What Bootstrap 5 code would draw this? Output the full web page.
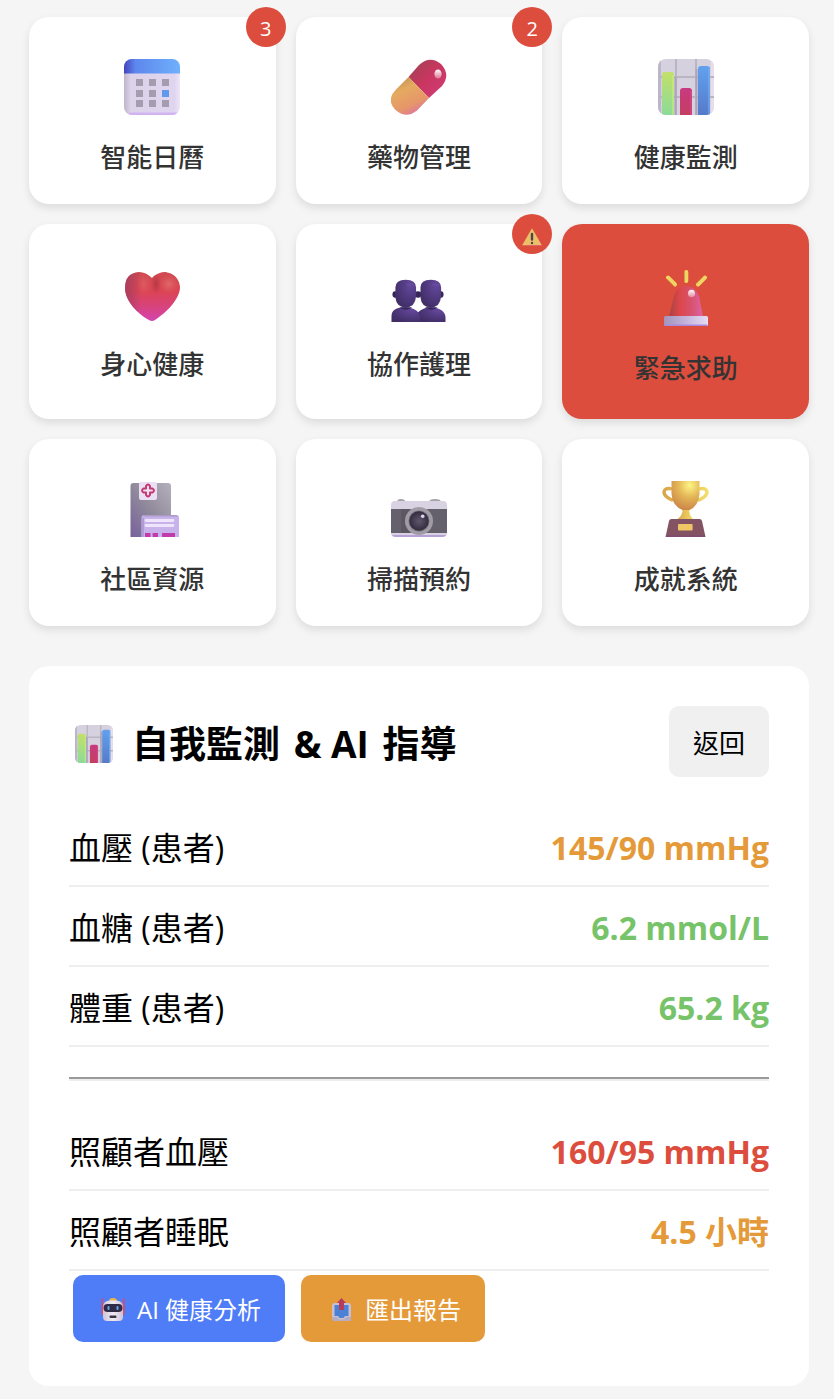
<!DOCTYPE html>
<html lang="zh-Hant">
<head>
<meta charset="utf-8">
<meta name="viewport" content="width=device-width, initial-scale=1">
<title>健康照護</title>
<link href="https://cdn.jsdelivr.net/npm/bootstrap@5.3.0/dist/css/bootstrap.min.css" rel="stylesheet">
<style>
body{background:#f5f5f5;color:#000;font-family:"Open Sans","Noto Sans CJK TC",sans-serif}
.page{padding:17px 25px 13px 29px}
.tiles{display:grid;grid-template-columns:repeat(3,minmax(0,1fr));gap:20px;margin-bottom:40px}
.tile{border:0;border-radius:20px;background:#fff;color:#333;padding:42px 10px 29px;box-shadow:0 4px 8px rgba(0,0,0,.1);font-size:26px;line-height:36px;font-weight:500}
.tile svg{width:56px;height:56px;margin-bottom:24px}
.tile-sos{background:#dc4d3d;padding-top:46px;padding-bottom:33px}
.count{top:-10px;right:-10px;width:40px;height:40px;padding-top:3px;background:#dc4d3d;color:#fff;font-size:20px;line-height:24px;font-weight:400}
.count svg{width:22px;height:20px;margin:3px 0 0}
.panel{background:#fff;border-radius:20px;padding:40px}
.panel-head{margin-bottom:30px}
.panel-head h2{font-size:37px;line-height:48px;font-weight:700;padding:4px 0 0 6px;gap:19px}
.panel-head svg{width:38px;height:38px}
.latin{margin:0 4px}
.back{background:#f0f0f0;border:0;border-radius:10px;font-size:26px;line-height:39px;padding:18px 24px 14px;color:#000}
.reading{height:80px;padding-top:4px;border-bottom:2px solid #eee;font-size:32px;line-height:48px}
.reading dt{font-weight:400}.reading dd{font-weight:700}
.warn{color:#e59a3a}.good{color:#77c36a}.bad{color:#dc4d3d}
.split{margin:30px 0;border:0;border-top:2px solid #9a9a9a;border-bottom:2px solid #eee;opacity:1}
.action{border:0;border-radius:10px;color:#fff;font-size:24px;line-height:35px;padding:17px 24px 15px;margin:4px}
.action svg{width:24px;height:24px;margin:0 12px 0 4px}
.act-ai{background:#4f7cf7}.act-out{background:#e59a3a}
</style>
</head>
<body>
<svg width="0" height="0" class="position-absolute" aria-hidden="true">
<defs>
<linearGradient id="calTop"><stop stop-color="#4144bd"/><stop offset=".2" stop-color="#5d87ed"/><stop offset="1" stop-color="#6fb0fc"/></linearGradient>
<linearGradient id="calBody"><stop stop-color="#bdb5c9"/><stop offset=".12" stop-color="#dcd3ea"/><stop offset=".9" stop-color="#dfd5ef"/><stop offset="1" stop-color="#eee6f7"/></linearGradient>
<linearGradient id="red" x1="0" y1="0" x2="1" y2="1"><stop stop-color="#9c4454"/><stop offset=".5" stop-color="#c9365f"/><stop offset="1" stop-color="#d43c7e"/></linearGradient>
<linearGradient id="amber" x1="0" y1="0" x2=".5" y2="1"><stop stop-color="#b08a4e"/><stop offset=".4" stop-color="#e5aa61"/><stop offset=".8" stop-color="#e69669"/><stop offset="1" stop-color="#e07c94"/></linearGradient>
<linearGradient id="gr" x2="0" y2="1"><stop stop-color="#c2e069"/><stop offset="1" stop-color="#8cdb98"/></linearGradient>
<linearGradient id="pk" x2="0" y2="1"><stop stop-color="#c83a80"/><stop offset="1" stop-color="#c43e62"/></linearGradient>
<linearGradient id="bl" x2="0" y2="1"><stop stop-color="#62a1ee"/><stop offset="1" stop-color="#567aca"/></linearGradient>
<linearGradient id="heart" x2="0" y2="1"><stop stop-color="#cf4a50"/><stop offset=".4" stop-color="#db4454"/><stop offset=".7" stop-color="#d8437c"/><stop offset="1" stop-color="#d345b0"/></linearGradient>
<linearGradient id="heartL"><stop stop-color="#963a62" stop-opacity=".7"/><stop offset=".3" stop-color="#963a62" stop-opacity="0"/></linearGradient>
<radialGradient id="glow"><stop stop-color="#e27173"/><stop offset="1" stop-color="#e06060" stop-opacity="0"/></radialGradient>
<radialGradient id="shade"><stop stop-color="#a8333f" stop-opacity=".7"/><stop offset="1" stop-color="#a8333f" stop-opacity="0"/></radialGradient>
<radialGradient id="head" cx=".75" cy=".2" r=".9"><stop stop-color="#65489c"/><stop offset=".5" stop-color="#513a80"/><stop offset="1" stop-color="#3f2d64"/></radialGradient>
<linearGradient id="dome"><stop stop-color="#a54343"/><stop offset=".3" stop-color="#dc4649"/><stop offset=".65" stop-color="#d8526e"/><stop offset="1" stop-color="#dd64a5"/></linearGradient>
<linearGradient id="foot"><stop stop-color="#a394bd"/><stop offset=".5" stop-color="#c4b4dc"/><stop offset="1" stop-color="#e6dcf5"/></linearGradient>
<linearGradient id="shine" x2="0" y2="1"><stop stop-color="#fff"/><stop offset="1" stop-color="#fff" stop-opacity=".3"/></linearGradient>
<linearGradient id="tower" x1="0" y1="1" x2="1" y2="0"><stop stop-color="#76609c"/><stop offset=".5" stop-color="#908a9a"/><stop offset="1" stop-color="#b5b0be"/></linearGradient>
<radialGradient id="lens"><stop stop-color="#5f566b"/><stop offset=".5" stop-color="#4a4256"/><stop offset="1" stop-color="#322b3e"/></radialGradient>
<radialGradient id="gold" cx=".65" cy=".15" r=".85"><stop stop-color="#fdf585"/><stop offset=".5" stop-color="#e3b556"/><stop offset="1" stop-color="#cd8748"/></radialGradient>
<linearGradient id="goldL"><stop stop-color="#d9a548"/><stop offset="1" stop-color="#f3dc67"/></linearGradient>
<linearGradient id="bot"><stop stop-color="#cfc6d6"/><stop offset=".5" stop-color="#f0e9f4"/><stop offset="1" stop-color="#cdc2d5"/></linearGradient>
<clipPath id="r56"><rect width="56" height="56" rx="8"/></clipPath>
<symbol id="chart" viewBox="0 0 56 56"><g clip-path="url(#r56)"><path fill="#d6d1df" d="M0 0h56v56H0z"/><path fill="#bdb6ca" d="M0 0h3v56H0z"/><path fill="#e7ddec" d="M53 0h3v56h-3z"/><path stroke="#b9b5c1" stroke-width="2" d="M18 0v56M38 0v56M0 18h56M0 38h56"/><path stroke="#aba2bb" stroke-width="2" d="M17.500 18v38M38.500 10v46"/><path d="M4 56V16q0-3 3-3h6q3 0 3 3v40z" fill="url(#gr)"/><path d="M22 56V32q0-3 3-3h6q3 0 3 3v24z" fill="url(#pk)"/><path d="M40 56V10q0-3 3-3h6q3 0 3 3v46z" fill="url(#bl)"/><path stroke="#d0ee7b" d="M15 16v40"/><path stroke="#d75093" d="M33 32v24"/><path stroke="#77b6fa" d="M51 10v46"/></g></symbol>
</defs>
</svg>
<main class="page">
<section class="tiles" aria-label="功能">
<button type="button" class="tile position-relative d-flex flex-column align-items-center">
<svg viewBox="0 0 56 56" aria-hidden="true"><g clip-path="url(#r56)"><path fill="url(#calBody)" d="M0 0h56v56H0z"/><path fill="#d2b3f2" d="M5 53.500h48V56H5z"/><path fill="url(#calTop)" d="M0 0h56v14.500H0z"/></g><path fill="#a39daf" d="M12 20h7v7h-7zM25 20h7v7h-7zM38 20h7v7h-7zM12 31h7v7h-7zM25 31h7v7h-7zM12 41h7v7h-7zM25 41h7v7h-7zM38 41h7v7h-7z"/><path fill="#6198ee" d="M38 31h7v7h-7z"/></svg>
<span>智能日曆</span><span class="count position-absolute rounded-circle d-flex align-items-center justify-content-center">3</span></button>
<button type="button" class="tile position-relative d-flex flex-column align-items-center">
<svg viewBox="0 0 56 56" aria-hidden="true"><path fill="url(#red)" d="M17.500 18 28 6q11-10 22-1 10 11 1 22L38 39z"/><path fill="url(#amber)" d="M17.500 18 5 30.500q-10 10-1 20 11 10 22 1L38 39z"/><ellipse cx="47" cy="15" rx="3.600" ry="4.600" fill="url(#shine)"/></svg>
<span>藥物管理</span><span class="count position-absolute rounded-circle d-flex align-items-center justify-content-center">2</span></button>
<button type="button" class="tile d-flex flex-column align-items-center">
<svg aria-hidden="true"><use href="#chart"/></svg><span>健康監測</span></button>
<button type="button" class="tile d-flex flex-column align-items-center">
<svg viewBox="0 0 56 56" aria-hidden="true"><path fill="url(#heart)" d="M28 12Q22 6 15 6 1 7 1 22C1 35 14 48 25 54q3 2 6 0C43 46 56 33 56 21 55 7 41 6 41 6 33 6 28 12 28 12z"/><path fill="url(#heartL)" d="M28 12Q22 6 15 6 1 7 1 22C1 35 14 48 25 54q3 2 6 0C43 46 56 33 56 21 55 7 41 6 41 6 33 6 28 12 28 12z"/><ellipse cx="32" cy="18" rx="5" ry="10" fill="url(#shade)"/><circle cx="45" cy="18" r="10" fill="url(#glow)" opacity=".8"/><ellipse cx="20" cy="18" rx="8" ry="12" fill="url(#glow)" opacity=".5"/></svg>
<span>身心健康</span></button>
<button type="button" class="tile position-relative d-flex flex-column align-items-center">
<svg viewBox="0 0 56 57" aria-hidden="true"><g fill="#37255a"><ellipse cx="3.500" cy="29" rx="2.500" ry="3.200"/><ellipse cx="27" cy="29" rx="3.500" ry="3.200"/><ellipse cx="50.500" cy="29" rx="2.500" ry="3.200"/></g><path fill="url(#head)" d="M27 57V47q6-5 13-5 15 1 15 11v4z"/><path fill="url(#head)" d="M0 57v-6q0-9 14-9 15 1 15 11v4z"/><path fill="#37255a" d="M8 42h13q-6 5-13 0zM34 42h13q-6 5-13 0z"/><path fill="url(#head)" d="M4 22q0-8 10.500-8T25 22v9q-1 11-10.500 11T4 32z"/><path fill="url(#head)" d="M29.500 22q0-8 10.500-8t10.500 8v9q-1 11-10.500 11T29.500 32z"/><path stroke="#6d4fa6" stroke-width="1.800" stroke-linecap="round" opacity=".7" d="M16 19h6M42 19h6"/></svg>
<span>協作護理</span><span class="count position-absolute rounded-circle d-flex align-items-center justify-content-center"><svg viewBox="0 0 22 20" role="img" aria-label="警告"><path fill="url(#amber)" d="M11 1 21 18.500H1z"/><path fill="#edbf69" d="M11 2 20.500 18H1.500z"/><path stroke="#4b4550" stroke-width="2.400" stroke-linecap="round" d="M11 7v5.500M11 16v.1"/></svg></span></button>
<button type="button" class="tile tile-sos d-flex flex-column align-items-center">
<svg viewBox="0 0 56 56" aria-hidden="true"><path stroke="#f1d562" stroke-width="4" stroke-linecap="round" d="M28.300 2v9M10 7.500l7 7M47 7.500l-7 7"/><path stroke="#d49b4a" stroke-width="1" stroke-linecap="round" d="M26.500 3v9M9.500 9.500l6 6M45 7l-6 6"/><path fill="url(#dome)" d="M11 47 16 26Q19 16 28 16t13 10l4 21z"/><ellipse cx="33.500" cy="23.500" rx="3.500" ry="3.800" fill="url(#shine)"/><rect x="6" y="46" width="44" height="10" rx="1.500" fill="url(#foot)"/><path stroke="#a98ae0" stroke-width="1.500" d="M7 55.200h42"/></svg>
<span>緊急求助</span></button>
<button type="button" class="tile d-flex flex-column align-items-center">
<svg viewBox="0 0 56 56" aria-hidden="true"><path fill="url(#tower)" d="M6.500 56V5q0-3 3-3H44q3 0 3 3v51z"/><rect x="15" y="1" width="18" height="18" rx="2" fill="#eadff5"/><path fill="none" stroke="#c4376b" stroke-width="1.900" stroke-linejoin="round" d="M22 7.500V5q2-3 4 0v2.500h2.500q3 2 0 4H26V14q-2 3-4 0v-2.500h-2.500q-3-2 0-4z"/><path fill="#c7b2ec" d="M17.500 56V37q0-3 3-3H52q3 0 3 3v19z"/><path fill="#a99bc1" d="M18.500 35.500q1-1.500 3-1.500h30q2 0 3 1.500z"/><path fill="#b19bd6" d="M17.500 37H20v19h-2.500z"/><path stroke="#eee5fa" stroke-width="2.800" stroke-linecap="round" d="M22 39.500h27M22 44.500h27"/><path fill="#c33bab" d="M21 52h5.500v4H21zM28.600 52H34v4h-5.400zM38 52h13v4H38z"/></svg>
<span>社區資源</span></button>
<button type="button" class="tile d-flex flex-column align-items-center">
<svg viewBox="0 0 56 56" aria-hidden="true"><path fill="#a6a2a9" d="M6 21q0-3 4-3t4.500 3zM38 21q0-3 6-3t6 3z"/><rect y="20" width="56" height="36" rx="4" fill="#d8d2e2"/><path fill="#64606c" d="M0 28h56v24H0z"/><path fill="#504b58" d="M10 28h9v24h-9z" opacity=".4"/><path fill="#b7a0d6" d="M1 54h54q-1 2-4 2H5q-3 0-4-2z"/><circle cx="28" cy="40" r="14" fill="#a09ca6"/><circle cx="28" cy="40" r="10.500" fill="#716b79"/><circle cx="28" cy="40" r="9.700" fill="url(#lens)"/><circle cx="31.700" cy="35.300" r="1.800" fill="#ddd6e8"/></svg>
<span>掃描預約</span></button>
<button type="button" class="tile d-flex flex-column align-items-center">
<svg viewBox="0 0 56 56" aria-hidden="true"><path fill="none" stroke="url(#goldL)" stroke-width="3.300" d="M14 8Q6 6 6 12q1 4 9 7.500M41 8q8-2 8 4-1 4-9 7.500"/><path fill="url(#goldL)" d="M24.500 28h7q-1 6 4 10.500H19q6-4 5.500-10.500z"/><path fill="url(#gold)" d="M13.500 0H41.500v13q-1 12-10 16h-7q-10-4-11-16z"/><path fill="#845363" d="M13.500 38h28q2 0 2.500 2l3.500 16H7.500L11 40q.5-2 2.500-2z"/><path stroke="#7d4b73" stroke-width="1.500" d="M8 55.200h39"/><rect x="20" y="43" width="14.600" height="6.500" rx=".8" fill="#efc566"/></svg>
<span>成就系統</span></button>
</section>
<section class="panel">
<header class="panel-head d-flex justify-content-between align-items-center">
<h2 class="d-flex align-items-center mb-0"><svg aria-hidden="true"><use href="#chart"/></svg><span>自我監測 <span class="latin">&amp; AI</span> 指導</span></h2>
<button type="button" class="back">返回</button>
</header>
<dl class="m-0">
<div class="reading d-flex justify-content-between align-items-center"><dt>血壓 (患者)</dt><dd class="m-0 warn">145/90 mmHg</dd></div>
<div class="reading d-flex justify-content-between align-items-center"><dt>血糖 (患者)</dt><dd class="m-0 good">6.2 mmol/L</dd></div>
<div class="reading d-flex justify-content-between align-items-center"><dt>體重 (患者)</dt><dd class="m-0 good">65.2 kg</dd></div>
</dl>
<hr class="split">
<dl class="m-0">
<div class="reading d-flex justify-content-between align-items-center"><dt>照顧者血壓</dt><dd class="m-0 bad">160/95 mmHg</dd></div>
<div class="reading d-flex justify-content-between align-items-center"><dt>照顧者睡眠</dt><dd class="m-0 warn">4.5 小時</dd></div>
</dl>
<div class="d-flex flex-wrap gap-2">
<button type="button" class="action act-ai d-flex align-items-center"><svg viewBox="0 0 24 24" aria-hidden="true"><path stroke="#d84c66" stroke-width="1.600" stroke-linecap="round" d="M1.200 1v15M22.800 1v15"/><path fill="#e8b642" d="M8 3q0-3 4-3t4 3z"/><path fill="url(#bot)" d="M2 9q0-6.500 7-6.500h6q7 0 7 6.500v10q0 4-4 4H6q-4 0-4-4z"/><rect x="2.500" y="6" width="19" height="8" rx="4" fill="#302a46"/><path stroke="#63a8e8" stroke-width="2" stroke-linecap="round" d="M7.500 9v2M16.500 9v2"/><rect x="8.500" y="17.500" width="7" height="2.500" rx="1" fill="#3b3445"/></svg><span>AI 健康分析</span></button>
<button type="button" class="action act-out d-flex align-items-center"><svg viewBox="0 0 24 24" aria-hidden="true"><path fill="#c8bfd2" d="M3 8q0-3 3-3h13q3 0 3 3v15H6q-3 0-3-3z"/><path fill="#4c82d5" d="M5.500 7h14v11H16l-1.500 2h-4L9 18H5.500z"/><path fill="#aaa1b8" d="M3 19h5l2 2.500h5l2-2.500h5v4H3z" opacity=".6"/><path fill="#b73b5a" d="M12.500 0 17 5h-2v7h-5V5H8z"/></svg><span>匯出報告</span></button>
</div>
</section>
</main>
<script src="https://cdn.jsdelivr.net/npm/bootstrap@5.3.0/dist/js/bootstrap.bundle.min.js"></script>
</body>
</html>
